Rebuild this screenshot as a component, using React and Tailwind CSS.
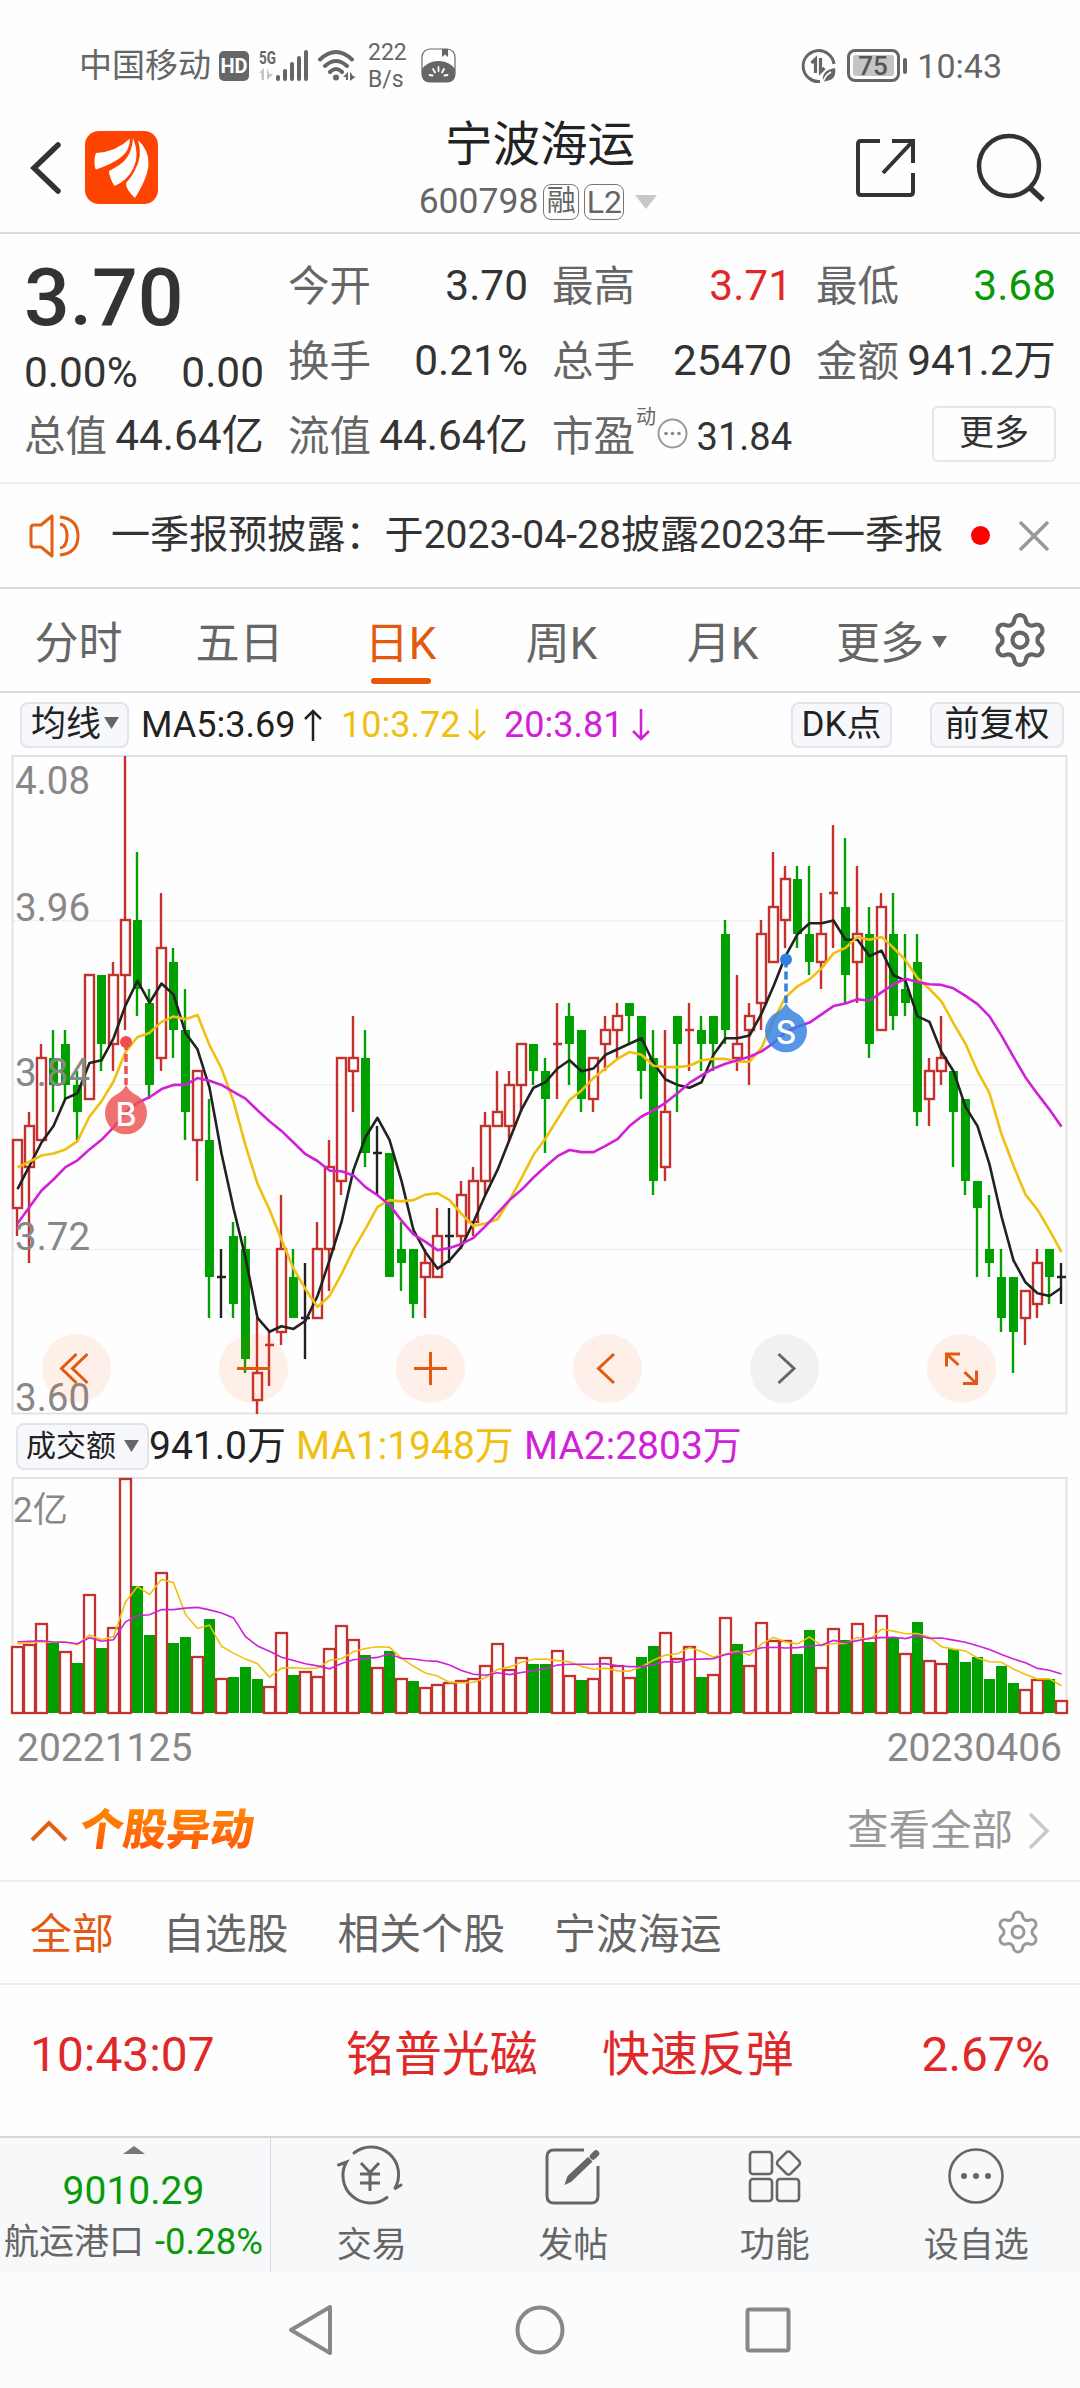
import React from 'react';
import { Settings } from 'lucide-react';

// [high, open, close, low] as 0.01 steps below the top of the axis (4.08)
const candles = [
  [28, 33, 28, 35], [26, 30, 27, 37], [21, 28, 22, 28], [20, 22, 24, 26], [20, 21, 24, 25],
  [23, 24, 26, 28], [16, 25, 16, 25], [16, 16, 21, 23], [15, 21, 16, 23], [0, 16, 12, 20],
  [7, 12, 17, 19], [17, 18, 24, 25], [10, 22, 14, 23], [14, 15, 20, 22], [17, 20, 26, 28],
  [23, 28, 23, 31], [25, 28, 38, 41], [36, 38, 38, 41], [34, 35, 40, 41], [35, 36, 44, 45],
  [41, 47, 45, 48], [42, 43, 43, 46], [32, 42, 36, 43], [36, 38, 41, 41], [37, 41, 41, 44],
  [34, 41, 36, 41], [28, 36, 30, 39], [22, 31, 22, 32], [19, 23, 22, 26], [20, 22, 29, 30],
  [27, 29, 29, 32], [29, 29, 38, 38], [34, 36, 37, 39], [36, 36, 40, 41], [36, 38, 37, 41],
  [33, 38, 35, 38], [33, 35, 35, 37], [31, 35, 32, 36], [30, 34, 31, 35], [26, 31, 27, 32],
  [23, 27, 26, 27], [23, 27, 24, 28], [21, 24, 21, 26], [21, 21, 23, 24], [22, 23, 25, 29],
  [18, 21, 21, 25], [18, 19, 21, 24], [20, 20, 25, 26], [22, 25, 22, 26], [19, 21, 20, 23],
  [18, 20, 19, 22], [18, 18, 19, 21], [19, 19, 23, 25], [20, 22, 31, 32], [20, 30, 26, 31],
  [19, 19, 21, 26], [18, 20, 20, 23], [19, 20, 21, 23], [19, 19, 21, 23], [12, 13, 20, 21],
  [16, 22, 21, 23], [18, 20, 19, 24], [12, 18, 13, 20], [7, 15, 11, 15], [8, 12, 9, 14],
  [8, 9, 13, 14], [8, 13, 15, 16], [10, 15, 13, 17], [5, 10, 10, 14], [6, 11, 16, 18],
  [8, 15, 13, 18], [11, 13, 21, 22], [10, 20, 11, 20], [10, 13, 19, 20], [13, 17, 18, 19],
  [13, 15, 26, 27], [22, 25, 23, 27], [19, 23, 22, 24], [23, 23, 26, 30], [25, 25, 31, 32],
  [31, 31, 33, 38], [32, 36, 37, 38], [36, 38, 41, 42], [38, 38, 42, 45], [39, 41, 39, 43],
  [36, 40, 37, 41], [36, 36, 38, 40], [37, 38, 38, 40],
];

const volumes = [
  200, 206, 269, 210, 185, 151, 356, 196, 259, 705, 382, 235, 422, 211, 229, 172, 283, 106, 109, 139,
  103, 80, 242, 115, 127, 110, 196, 265, 221, 175, 137, 187, 104, 97, 77, 88, 93, 99, 104, 145,
  211, 133, 169, 148, 148, 188, 115, 100, 104, 167, 145, 109, 169, 202, 244, 166, 202, 109, 118, 289,
  208, 145, 274, 220, 220, 178, 250, 139, 256, 220, 271, 214, 295, 229, 181, 274, 160, 151, 193, 154,
  169, 103, 142, 91, 73, 103, 103, 40,
];

// values for the first days, where the window reaches back before the chart
const ma5Start = [31.6, 29.9, 28.2, 27];
const ma10Start = [30, 29.6, 29.15, 29, 28.7, 28.1, 26.3, 25.2, 23.75];
const ma20Start = [34.1, 32.9, 31.7, 30.9, 30, 29.5, 28.7, 28, 27.1, 26, 25.3, 24.9, 24.3, 24, 24, 23.5, 23.7, 24, 24.5];
const vol5Start = [208, 211, 214, 213];
const vol10Start = [214, 215, 217, 213, 212, 208, 226, 215, 220];

const RED = '#c5312d';
const GREEN = '#00a000';
const BLACK = '#222222';

const xAt = (i) => 17 + i * 12;
const priceY = (k) => Math.round(k * 13.706);
const lineY = (k) => k * 13.706;
const volY = (v) => Math.round(235 - v / 3);
const volLineY = (v) => 235 - v / 3;

const average = (values, n, start) =>
  values.map((_, i) => {
    if (i < start.length) return start[i];
    return values.slice(i - n + 1, i + 1).reduce((a, b) => a + b, 0) / n;
  });

const toPoints = (values, scale) => values.map((v, i) => `${xAt(i) + 0.5},${scale(v).toFixed(1)}`).join(' ');

const closes = candles.map((c) => c[2]);
const ma5 = toPoints(average(closes, 5, ma5Start), lineY);
const ma10 = toPoints(average(closes, 10, ma10Start), lineY);
const ma20 = toPoints(average(closes, 20, ma20Start), lineY);
const vol5 = toPoints(average(volumes, 5, vol5Start), volLineY);
const vol10 = toPoints(average(volumes, 10, vol10Start), volLineY);

const Candle = ({ index, data }) => {
  const [high, open, close, low] = data;
  const x = xAt(index);
  const prev = index > 0 ? closes[index - 1] : 99;
  if (open === close) {
    const color = close < prev ? RED : BLACK;
    return (
      <g stroke={color} strokeWidth="2.400">
        <path d={`M${x} ${priceY(high)}V${priceY(low)}M${x - 4} ${priceY(open)}h9`} />
      </g>
    );
  }
  if (close > open) {
    return (
      <g>
        <path d={`M${x} ${priceY(high)}V${priceY(low)}`} stroke={GREEN} strokeWidth="2.400" />
        <rect x={x - 4} y={priceY(open)} width="9" height={priceY(close) - priceY(open)} fill={GREEN} />
      </g>
    );
  }
  return (
    <g stroke={RED} strokeWidth="2.400" fill="none">
      <path d={`M${x} ${priceY(high)}V${priceY(close)}M${x} ${priceY(open)}V${priceY(low)}`} />
      <rect x={x - 4} y={priceY(close)} width="9" height={priceY(open) - priceY(close)} />
    </g>
  );
};

const Marker = ({ x, dotY, y, letter, color }) => (
  <g>
    <path d={`M${x} ${dotY}V${y - 29}`} stroke={color} strokeWidth="3.5" strokeDasharray="8 4" />
    <circle cx={x} cy={dotY} r="6" fill={color} />
    <g opacity="0.82" fill={color}>
      <path d={`M${x} ${y - 29}c3 5 6 8 12 11a21 21 0 1 1 -24 0c6 -3 9 -6 12 -11z`} />
    </g>
    <text x={x} y={y + 11.5} fill="#fff" fontFamily="Inter" fontSize="32" fontWeight="500" textAnchor="middle">{letter}</text>
  </g>
);

const StatusBar = () => (
  <div className="flex h-[116px] items-center justify-between pt-[15px] pl-[79px] pr-[78px] text-[#666]">
    <div className="flex items-center">
      <span className="w-[140px] text-[33px] leading-none">中国移动</span>
      <span className="flex h-[30px] w-[30px] items-center justify-center rounded-[5px] bg-[#666] text-[20px] font-bold leading-none text-white">HD</span>
      <svg width="54" height="34" viewBox="0 0 54 34" className="ml-[9px] overflow-visible" fill="#666">
        <text x="1" y="14.5" fontSize="18" fontWeight="700" textLength="17" lengthAdjust="spacingAndGlyphs">5G</text>
        <path d="M1 24l5-5v12H3.500v-7zM9 19v12l6-6h-3.500z" fill="#c4c4c4" />
        <rect x="18" y="26" width="4" height="6" rx="2" />
        <rect x="25" y="20" width="4" height="12" rx="2" />
        <rect x="32" y="13" width="4" height="19" rx="2" />
        <rect x="39" y="7" width="4" height="25" rx="2" />
        <rect x="46" y="1" width="4" height="31" rx="2" />
      </svg>
      <svg width="40" height="34" viewBox="0 0 40 34" className="ml-[5px]" fill="none" stroke="#666" strokeWidth="4" strokeLinecap="round">
        <path d="M3 10.500Q19 -4.500 35 10.500M8 17q11-10 22 0M13 23q6-6 12 0" />
        <circle cx="19" cy="28.500" r="3" fill="#666" stroke="none" />
        <path d="M26 28l5-5v8h-2v-3zM33 23v9l6-4.500h-2.500z" fill="#666" stroke="none" />
      </svg>
      <div className="ml-[11px] w-[50px] text-[23px] leading-[27px]">
        <div>222</div>
        <div>B/s</div>
      </div>
      <svg width="35" height="35" viewBox="0 0 35 35" className="ml-[3px]">
        <rect x="1" y="1" width="33" height="33" rx="8" fill="#fff" stroke="#666" strokeWidth="1.200" />
        <path d="M1 21Q7 13 17.500 13T34 21V27q0 7-7 7H8q-7 0-7-7z" fill="#666" />
        <path d="M21 1h6v8l-3-2.500-3 2.500z" fill="#666" />
        <path d="M17.500 19v4M12 21l2 3.500M23 21l-2 3.500M8.500 27l3 .5M26.500 27l-3 .5" stroke="#fff" strokeWidth="1.800" strokeLinecap="round" />
      </svg>
    </div>
    <div className="flex items-center">
      <svg width="36" height="36" viewBox="0 0 36 36" fill="none" stroke="#666" strokeWidth="3">
        <path d="M19 33.500A15.500 15.500 0 1 1 33 16" />
        <path d="M10.500 15l4-4v14M19.500 10v14l4-4" strokeWidth="3.200" />
        <path d="M22 34q-2-12 12-14q2 12-9 13z" fill="#666" stroke="none" />
        <path d="M22 35q1-7 8-11" stroke="#fff" strokeWidth="1.500" />
      </svg>
      <span className="ml-2.5 flex h-[33px] w-[53px] rounded-[8px] border-[3px] border-[#666] p-[3px]">
        <span className="flex w-full items-center justify-start rounded-[3px] bg-[#c4c4c4] pl-[5px] text-[26px] font-medium leading-none text-[#555]">75</span>
      </span>
      <span className="ml-[3px] h-4 w-1 rounded-full bg-[#666]" />
      <span className="ml-[10px] text-[34px] leading-none">10:43</span>
    </div>
  </div>
);

const Header = () => (
  <div className="grid h-[118px] grid-cols-3 items-center border-b-2 border-[#dcdcdc] pb-[20px]">
    <div className="flex items-center pl-[29px]">
      <svg width="34" height="54" viewBox="0 0 34 54" fill="none" stroke="#333" strokeWidth="5.500" strokeLinecap="round">
        <path d="M29 4L5 27l24 23" />
      </svg>
      <svg width="73" height="73" viewBox="0 0 73 73" className="ml-[22px]">
        <rect width="73" height="73" rx="14" fill="#ff4300" />
        <path d="M45 7.500Q31 21 11 22q-1.500 3-1.500 9t1.500 7.500Q25 34 35 27T45 7.500z" fill="#fff" />
        <path d="M48 7q-1 18-13 26.500-6 4-11 6.500 0 6 5.500 15Q42 50 48.500 37T48 7z" fill="#fff" />
        <path d="M53 9q5 16-3 30-4 8-9 13 0 7 9 15Q63 46 63.500 33 64 19 53 9z" fill="#fff" />
      </svg>
    </div>
    <div className="flex flex-col items-center gap-[14px] pt-[6px]">
      <div className="text-[47.500px] leading-none text-[#222]">宁波海运</div>
      <div className="flex h-[36px] items-center pr-[4px] text-[35.500px] leading-none text-[#666]">
        <span>600798</span>
        <span className="ml-[5px] flex h-[36px] w-[36px] items-center justify-center rounded-[8px] border border-[#777] text-[29px]">融</span>
        <span className="ml-[5px] flex h-[36px] w-[40px] items-center justify-center rounded-[8px] border border-[#777] text-[32px]">L2</span>
        <svg width="22" height="14" className="ml-[11px]"><path d="M0 0h22l-11 14z" fill="#c8c8c8" /></svg>
      </div>
    </div>
    <div className="flex items-center justify-end gap-[60px] pr-[34px]">
      <svg width="60" height="60" viewBox="0 0 60 60" fill="none" stroke="#333" strokeWidth="4">
        <path d="M24 3H5q-3 0-3 3v48q0 3 3 3h49q3 0 3-3V35M36 3h21v22M57 3L27 35" />
      </svg>
      <svg width="70" height="70" viewBox="0 0 70 70" fill="none" stroke="#333" strokeWidth="4.500">
        <circle cx="33" cy="33" r="30" />
        <path d="M53 54l14 13" strokeWidth="5.500" />
      </svg>
    </div>
  </div>
);

const Quote = ({ label, value, color = 'text-[#333]' }) => (
  <div className="flex items-center justify-between whitespace-nowrap">
    <span className="text-[41.500px] text-[#666]">{label}</span>
    <span className={color}>{value}</span>
  </div>
);

const QuotePanel = () => (
  <div className="grid h-[250px] grid-cols-4 grid-rows-[75px_75px_75px] gap-x-6 border-b-2 border-[#ededed] px-6 pt-[15px] text-[42.400px] leading-none text-[#333]">
    <div className="row-span-2">
      <div className="flex h-[98px] items-center text-[80.500px] font-medium leading-none">3.70</div>
      <div className="flex h-[52px] items-center justify-between">
        <span>0.00%</span>
        <span>0.00</span>
      </div>
    </div>
    <Quote label="今开" value="3.70" />
    <Quote label="最高" value="3.71" color="text-[#e02828]" />
    <Quote label="最低" value="3.68" color="text-[#089a08]" />
    <Quote label="换手" value="0.21%" />
    <Quote label="总手" value="25470" />
    <Quote label="金额" value="941.2万" />
    <Quote label="总值" value="44.64亿" />
    <Quote label="流值" value="44.64亿" />
    <div className="flex items-center">
      <span className="text-[41.500px] text-[#666]">市盈</span>
      <span className="-mt-10 ml-[1px] text-[20px] text-[#666]">动</span>
      <svg width="31" height="31" viewBox="0 0 31 31" className="mt-[-7px] ml-[1px]">
        <circle cx="15.500" cy="15.500" r="14" fill="none" stroke="#999" strokeWidth="2" />
        <circle cx="9" cy="15.500" r="1.800" fill="#888" />
        <circle cx="15.500" cy="15.500" r="1.800" fill="#888" />
        <circle cx="22" cy="15.500" r="1.800" fill="#888" />
      </svg>
      <span className="ml-auto text-[38px]">31.84</span>
    </div>
    <div className="flex items-center justify-end">
      <span className="-mt-[6px] flex h-[56px] w-[124px] items-center justify-center rounded-[6px] border-2 border-[#e6e6e6] text-[35px]">更多</span>
    </div>
  </div>
);

const Notice = () => (
  <div className="flex h-[105px] items-center border-b-2 border-[#dcdcdc] pl-[28px]">
    <svg width="54" height="46" viewBox="0 0 54 46" fill="none" stroke="#e25f14" strokeWidth="3" strokeLinejoin="round">
      <path d="M24 3v40l-11-9H6q-3 0-3-3V15q0-3 3-3h7z" />
      <path d="M32 11q7 1 7 12t-7 12M32 4q18 2 18 19T32 42" />
    </svg>
    <span className="ml-[29px] w-[849px] whitespace-nowrap text-[39.100px] leading-none text-[#333]">一季报预披露：于2023-04-28披露2023年一季报</span>
    <span className="ml-[11px] h-[19px] w-[19px] rounded-full bg-[#ff0000]" />
    <svg width="30" height="30" viewBox="0 0 30 30" className="ml-[29px]" stroke="#999" strokeWidth="3.500">
      <path d="M1 1l28 28M29 1L1 29" />
    </svg>
  </div>
);

const periods = ['分时', '五日', '日K', '周K', '月K'];

const PeriodTabs = () => (
  <div className="flex h-[104px] items-stretch border-b-2 border-[#dcdcdc] text-[44px] leading-none text-[#666]">
    {periods.map((name) => (
      <div key={name} className={`relative flex w-[161px] items-center justify-center pt-[8px] pr-[4px] ${name === '日K' ? 'text-[#e25a10]' : ''}`}>
        {name}
        {name === '日K' && <span className="absolute bottom-[7px] left-[49px] h-[6px] w-[60px] rounded-full bg-[#e85505]" />}
      </div>
    ))}
    <div className="flex items-center pt-[8px] pl-[31px]">
      更多
      <svg width="15" height="12" className="-mt-[4px] ml-[8px]"><path d="M0 0h15l-7.500 12z" fill="#666" /></svg>
      <Settings size={60} strokeWidth={1.7} color="#666" className="-mt-[8px] ml-[43px]" />
    </div>
  </div>
);

const Arrow = ({ up, color, className }) => (
  <svg width="18" height="32" viewBox="0 0 18 32" className={className} fill="none" stroke={color} strokeWidth="2.500">
    <path d={up ? 'M9 32V2M1 10l8-8 8 8' : 'M9 0v30M1 22l8 8 8-8'} />
  </svg>
);

const MaRow = () => (
  <div className="flex h-[63px] items-center text-[36px] leading-none text-[#222]">
    <div className="ml-[20px] flex h-[46px] w-[109px] items-center rounded-[8px] border-2 border-[#e2e4ea] bg-[#f7f8fb] pl-[9px] text-[35px]">
      均线
      <svg width="15" height="12" className="-mt-[3px] ml-[3px]"><path d="M0 0h15l-7.500 12z" fill="#666" /></svg>
    </div>
    <div className="ml-[12px] flex w-[200px] items-center">
      MA5:3.69
      <Arrow up color={BLACK} className="ml-[9px]" />
    </div>
    <div className="flex w-[163px] items-center text-[#f0c010]">
      10:3.72
      <Arrow color="#f0c010" className="ml-[8px]" />
    </div>
    <div className="flex items-center text-[#d021d8]">
      20:3.81
      <Arrow color="#d021d8" className="ml-[9px]" />
    </div>
    <div className="mr-[16px] ml-auto flex gap-[38px] text-[35px]">
      <div className="flex h-[46px] w-[101px] items-center justify-center rounded-[8px] border-2 border-[#e2e4ea] bg-[#f7f8fb]">DK点</div>
      <div className="flex h-[46px] w-[134px] items-center justify-center rounded-[8px] border-2 border-[#e2e4ea] bg-[#f7f8fb]">前复权</div>
    </div>
  </div>
);

const controls = [
  { id: 'first', path: 'M0 -14.500L-15 0L0 14.500M11 -14.500L-4 0L11 14.500' },
  { id: 'out', path: 'M-16.500 0h33' },
  { id: 'in', path: 'M-16.500 0h33M0 -16.500v33' },
  { id: 'prev', path: 'M6.500 -14.500L-9 0L6.500 14.500' },
  { id: 'next', path: 'M-6 -14.500L9.500 0L-6 14.500', off: true },
  { id: 'full', path: 'M-15 -2V-14.500H-1.500M-15 -14.500L-3 -3.500M15 2V15H1.500M15 15L3 3.500' },
];

const PriceChart = () => (
  <div className="relative h-[658px] font-[Roboto]">
    <svg width="1080" height="658" viewBox="0 0 1080 658" className="overflow-visible">
      <rect x="12.500" y="0" width="1054" height="657.500" fill="none" stroke="#e2e2e2" strokeWidth="2" />
      <path d="M13 164.500H1066M13 329H1066M13 493.500H1066" stroke="#eeeeee" strokeWidth="1.500" strokeDasharray="3 1" />
      {candles.map((c, i) => <Candle key={i} index={i} data={c} />)}
      <g fill="none" strokeWidth="2.600" strokeLinejoin="round">
        <polyline points={ma5} stroke="#222" />
        <polyline points={ma10} stroke="#f0c010" />
        <polyline points={ma20} stroke="#d021d8" />
      </g>
      <g fill="#888" fontSize="38.500">
        <text x="15" y="38">4.08</text>
        <text x="15" y="165">3.96</text>
        <text x="15" y="330">3.84</text>
        <text x="15" y="494">3.72</text>
        <text x="15" y="654.500">3.60</text>
      </g>
      <Marker x={126} dotY={286} y={358} letter="B" color="#ee5050" />
      <Marker x={786} dotY={203.500} y={276} letter="S" color="#3080e0" />
    </svg>
    <div className="absolute bottom-[11px] left-[42px] flex gap-[108px]">
      {controls.map(({ id, path, off }) => (
        <div key={id} className={`h-[69px] w-[69px] rounded-full ${off ? 'bg-[#222]/6' : 'bg-[#ff5a0a]/9'}`}>
          <svg width="69" height="69" viewBox="-34.500 -34.500 69 69" fill="none" stroke={off ? '#666' : '#e25a10'} strokeWidth="3">
            <path d={path} />
          </svg>
        </div>
      ))}
    </div>
  </div>
);

const VolumeChart = () => (
  <div>
    <div className="flex h-[64px] items-center text-[39px] leading-none text-[#222]">
      <div className="ml-[16px] flex h-[47px] w-[133px] items-center rounded-[8px] border-2 border-[#e2e4ea] bg-[#f7f8fb] pl-[8px] text-[30px]">
        成交额
        <svg width="15" height="12" className="ml-[8px]"><path d="M0 0h15l-7.500 12z" fill="#666" /></svg>
      </div>
      <span className="w-[147px]">941.0万</span>
      <span className="w-[228px] text-[#f0c010]">MA1:1948万</span>
      <span className="text-[#d021d8]">MA2:2803万</span>
    </div>
    <svg width="1080" height="235" viewBox="0 0 1080 235" className="overflow-visible">
      <path d="M12.500 235V0H1066.500V235" fill="none" stroke="#e2e2e2" strokeWidth="2" />
      {volumes.map((v, i) => {
        const up = i === 0 || closes[i] <= closes[i - 1];
        const y = volY(v);
        return up
          ? <rect key={i} x={xAt(i) - 5} y={y + 1} width="11" height={234 - y} fill="#fff" stroke={RED} strokeWidth="2.300" />
          : <rect key={i} x={xAt(i) - 5} y={y} width="11" height={235 - y} fill={GREEN} />;
      })}
      <g fill="none" strokeWidth="1.600">
        <polyline points={vol5} stroke="#f0c010" />
        <polyline points={vol10} stroke="#d021d8" />
      </g>
      <text x="13" y="44" fill="#888" fontSize="35">2亿</text>
    </svg>
    <div className="flex h-[68px] items-center justify-between pt-[2px] pr-[18px] pl-[17px] text-[39px] leading-none text-[#888]">
      <span>20221125</span>
      <span>20230406</span>
    </div>
  </div>
);

const MovesSection = () => (
  <div>
    <div className="flex h-[101px] items-center border-b-2 border-[#ededed] pr-[30px] pl-[30px]">
      <svg width="38" height="24" viewBox="0 0 38 24" fill="none" stroke="#e25f14" strokeWidth="4"><path d="M2 21L19 4l17 17" /></svg>
      <span className="ml-[12px] skew-x-[-8deg] bg-gradient-to-b from-[#ff8a00] to-[#ff4e0c] bg-clip-text text-[43.500px] font-black leading-[50px] text-transparent">个股异动</span>
      <span className="ml-auto text-[41.500px] leading-none text-[#999]">查看全部</span>
      <svg width="22" height="38" viewBox="0 0 22 38" className="ml-[15px]" fill="none" stroke="#c8c8c8" strokeWidth="3.500"><path d="M2 2l17 17L2 36" /></svg>
    </div>
    <div className="flex h-[103px] items-center gap-[49px] border-b-2 border-[#ededed] pt-[5px] pr-[38px] pl-[30px] text-[41.900px] leading-none text-[#666]">
      <span className="text-[#e25a10]">全部</span>
      <span>自选股</span>
      <span>相关个股</span>
      <span>宁波海运</span>
      <Settings size={48} strokeWidth={1.5} color="#999" className="-mt-[7px] ml-auto" />
    </div>
    <div className="flex h-[151px] items-center pr-[30px] pb-[10px] pl-[30px] text-[47.900px] leading-none text-[#e02828]">
      <span className="w-[316px]">10:43:07</span>
      <span className="w-[256px]">铭普光磁</span>
      <span>快速反弹</span>
      <span className="ml-auto">2.67%</span>
    </div>
  </div>
);

const TradeIcon = () => (
  <svg width="66" height="60" viewBox="0 0 66 60" fill="none" stroke="#666" strokeWidth="3" strokeLinecap="round" className="mr-[4px] overflow-visible">
    <path d="M17 7A27.500 27.500 0 0 1 57.500 43L64 39M50 51.500A27.500 27.500 0 0 1 9.500 16L1.500 19" />
    <path d="M24 17l9 9.500 9-9.500M23 28h20M23 37h20M33 27v18" strokeLinecap="butt" />
  </svg>
);

const PostIcon = () => (
  <svg width="56" height="60" viewBox="0 0 56 60" fill="none" stroke="#666" strokeWidth="3">
    <path d="M39 4H9Q2 4 2 11v39q0 7 7 7h37q7 0 7-7V20" />
    <path d="M19.500 39l3-9L43 11l4.500 4.500L26 36z" fill="#666" stroke="none" />
    <path d="M48 10.500l3-3" strokeWidth="6.500" strokeLinecap="round" />
  </svg>
);

const AppsIcon = () => (
  <svg width="54" height="60" viewBox="0 0 54 60" fill="none" stroke="#666" strokeWidth="2.600">
    <rect x="2" y="6" width="22" height="22" rx="3" />
    <rect x="2" y="33" width="22" height="22" rx="3" />
    <rect x="29" y="33" width="22" height="22" rx="3" />
    <rect x="31.500" y="8" width="18" height="18" rx="3" transform="rotate(45 40.500 17)" />
  </svg>
);

const MoreIcon = () => (
  <svg width="60" height="60" viewBox="0 0 60 60" fill="#666">
    <circle cx="30" cy="30" r="26.500" fill="none" stroke="#666" strokeWidth="2.600" />
    <circle cx="18" cy="30" r="3" />
    <circle cx="30" cy="30" r="3" />
    <circle cx="42" cy="30" r="3" />
  </svg>
);

const actions = [
  { label: '交易', Icon: TradeIcon },
  { label: '发帖', Icon: PostIcon },
  { label: '功能', Icon: AppsIcon },
  { label: '设自选', Icon: MoreIcon },
];

const BottomBar = () => (
  <div className="flex h-[136px] border-t-2 border-[#d4d7dc] bg-[#f7f8fa]">
    <div className="flex w-[271px] flex-col items-center border-r border-[#d4d7dc] pt-2 pr-[3px]">
      <svg width="22" height="8"><path d="M11 0l11 8H0z" fill="#777" /></svg>
      <span className="mt-[18px] text-[39px] leading-none text-[#089a08]">9010.29</span>
      <div className="mt-[13px] flex items-center gap-[11px] whitespace-nowrap leading-none">
        <span className="text-[35px] text-[#666]">航运港口</span>
        <span className="text-[36.500px] text-[#089a08]">-0.28%</span>
      </div>
    </div>
    <div className="grid flex-1 grid-cols-4 pr-[3px]">
      {actions.map(({ label, Icon }) => (
        <div key={label} className="flex flex-col items-center pt-2">
          <Icon />
          <span className="mt-[22px] text-[35px] leading-none text-[#666]">{label}</span>
        </div>
      ))}
    </div>
  </div>
);

const SystemNav = () => (
  <div className="flex h-[116px] items-center justify-center gap-[180px] bg-[#fcfcfc] pr-[2px]">
    <svg width="48" height="54" viewBox="0 0 48 54" fill="none" stroke="#888" strokeWidth="4" strokeLinejoin="round"><path d="M43 4v46L4 27z" /></svg>
    <svg width="50" height="50" viewBox="0 0 50 50" fill="none" stroke="#888" strokeWidth="4"><circle cx="25" cy="25" r="22.500" /></svg>
    <svg width="46" height="46" viewBox="0 0 46 46" fill="none" stroke="#888" strokeWidth="4"><rect x="2.500" y="2.500" width="41" height="41" rx="2" /></svg>
  </div>
);

export default function App() {
  return (
    <div className="flex h-[2388px] w-[1080px] flex-col overflow-hidden bg-[#fefefe] font-[Roboto,'Noto_Sans_CJK_SC',sans-serif]">
      <StatusBar />
      <Header />
      <QuotePanel />
      <Notice />
      <PeriodTabs />
      <MaRow />
      <PriceChart />
      <VolumeChart />
      <MovesSection />
      <BottomBar />
      <SystemNav />
    </div>
  );
}
